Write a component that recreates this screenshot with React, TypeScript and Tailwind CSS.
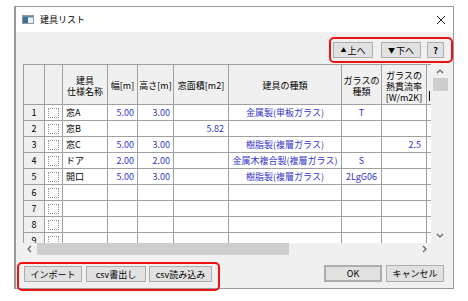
import type { ReactNode } from 'react';

type Row = {
    no: number;
    name?: string;
    w?: string;
    h?: string;
    area?: string;
    kind?: string;
    glass?: string;
    u?: string;
};

const rows: Row[] = [
    { no: 1, name: '窓A', w: '5.00', h: '3.00', kind: '金属製(単板ガラス)', glass: 'T' },
    { no: 2, name: '窓B', area: '5.82' },
    { no: 3, name: '窓C', w: '5.00', h: '3.00', kind: '樹脂製(複層ガラス)', u: '2.5' },
    { no: 4, name: 'ドア', w: '2.00', h: '2.00', kind: '金属木複合製(複層ガラス)', glass: 'S' },
    { no: 5, name: '開口', w: '5.00', h: '3.00', kind: '樹脂製(複層ガラス)', glass: '2LgG06' },
    { no: 6 },
    { no: 7 },
    { no: 8 },
    { no: 9 },
];

function Chevron({ dir }: { dir: 'up' | 'down' | 'left' | 'right' }) {
    const pts = {
        up: '1,5 4,2 7,5',
        down: '1,2 4,5 7,2',
        left: '5,1 2,4 5,7',
        right: '2,1 5,4 2,7',
    }[dir];
    return (
        <svg width="8" height="8" viewBox="0 0 8 8">
            <polyline points={pts} fill="none" stroke="#606060" strokeWidth="1.2" />
        </svg>
    );
}

function Btn({ children, className }: { children: ReactNode; className: string }) {
    return (
        <div
            className={`flex items-center justify-center bg-[#e1e1e1] border border-[#adadad] text-[9px] leading-none text-black ${className}`}
        >
            {children}
        </div>
    );
}

function Head({ w, children, className = '' }: { w: string; children?: ReactNode; className?: string }) {
    return (
        <div
            className={`${w} h-full shrink-0 border-r border-[#a0a0a0] bg-[#f0f0f0] flex flex-col items-center justify-center text-center text-[9px] leading-[11px] pt-[2px] ${className}`}
        >
            {children}
        </div>
    );
}

function Cell({ w, children, className = '' }: { w: string; children?: ReactNode; className?: string }) {
    return (
        <div
            className={`${w} h-full shrink-0 border-r border-[#a0a0a0] flex items-center text-[9px] leading-none whitespace-nowrap overflow-hidden ${className}`}
        >
            {children}
        </div>
    );
}

export default function App() {
    return (
        <div className="relative w-[468px] h-[301px] bg-white font-['Noto_Sans_CJK_JP','Noto_Sans',sans-serif] text-black overflow-hidden">
            <div className="ml-[14px] mt-[6px] w-[440px] h-[283px] border border-l-2 border-[#9a9a9a] flex flex-col">
                {/* title bar */}
                <div className="h-[25px] shrink-0 bg-white flex items-center pl-[6px] pr-[7px]">
                    <svg width="12" height="9" viewBox="0 0 12 9">
                        <rect x="0.5" y="0.5" width="11" height="8" fill="#e8eef2" stroke="#8a9aa6" />
                        <rect x="1" y="1" width="5" height="7" fill="#3f6f8c" />
                        <rect x="1" y="1" width="10" height="1.5" fill="#5d8aa6" />
                    </svg>
                    <span className="ml-[6px] text-[9px] leading-none">建具リスト</span>
                    <svg className="ml-auto" width="10" height="10" viewBox="0 0 10 10">
                        <path d="M1 1 L9 9 M9 1 L1 9" stroke="#222" strokeWidth="1" />
                    </svg>
                </div>

                <div className="flex-1 bg-[#f0f0f0] flex flex-col">
                    {/* toolbar */}
                    <div className="h-[32px] shrink-0 flex justify-end items-start pt-[10px] pr-[9px]">
                        <Btn className="w-[40px] h-[16px]">
                            <span className="text-[6px] mr-[1px]">▲</span>上へ
                        </Btn>
                        <Btn className="w-[40px] h-[16px] ml-[8px]">
                            <span className="text-[7px] mr-[1px]">▼</span>下へ
                        </Btn>
                        <Btn className="w-[17px] h-[16px] ml-[6px] font-bold text-[8px]">?</Btn>
                    </div>

                    {/* grid */}
                    <div className="ml-[7px] h-[191px] shrink-0 flex">
                        <div className="w-[408px] flex flex-col">
                            <div className="h-[179px] overflow-hidden border-l border-t border-[#a0a0a0] bg-white">
                                <div className="h-[40px] flex border-b border-[#a0a0a0]">
                                    <Head w="w-[21px]" className="bg-[#e9e9e9]" />
                                    <Head w="w-[18px]" />
                                    <Head w="w-[45px]">
                                        <span>建具</span>
                                        <span>仕様名称</span>
                                    </Head>
                                    <Head w="w-[30px]">幅[m]</Head>
                                    <Head w="w-[36px]">高さ[m]</Head>
                                    <Head w="w-[55px]">窓面積[m2]</Head>
                                    <Head w="w-[113px]">建具の種類</Head>
                                    <Head w="w-[40px]">
                                        <span>ガラスの</span>
                                        <span>種類</span>
                                    </Head>
                                    <Head w="w-[45px]" className="pt-[3px] leading-[10px]">
                                        <span>ガラスの</span>
                                        <span>熱貫流率</span>
                                        <span>[W/m2K]</span>
                                    </Head>
                                    <div className="w-[4px] h-full bg-[#f0f0f0] flex items-end pb-[3px] pl-[2px]">
                                        <div className="w-px h-[10px] bg-black" />
                                    </div>
                                </div>
                                {rows.map((r) => (
                                    <div key={r.no} className="h-[16px] flex border-b border-[#a0a0a0]">
                                        <Cell w="w-[21px]" className="bg-[#f0f0f0] justify-center">
                                            {r.no}
                                        </Cell>
                                        <Cell w="w-[18px]" className="justify-center">
                                            <div className="w-[11px] h-[10px] border border-dotted border-[#8c8c8c]" />
                                        </Cell>
                                        <Cell w="w-[45px]" className="pl-[3px]">
                                            {r.name}
                                        </Cell>
                                        <Cell w="w-[30px]" className="justify-end pr-[3px] text-[#3434c8]">
                                            {r.w}
                                        </Cell>
                                        <Cell w="w-[36px]" className="justify-end pr-[3px] text-[#3434c8]">
                                            {r.h}
                                        </Cell>
                                        <Cell w="w-[55px]" className="justify-end pr-[4px] text-[#3434c8]">
                                            {r.area}
                                        </Cell>
                                        <Cell w="w-[113px]" className="justify-center text-[#3434c8]">
                                            {r.kind}
                                        </Cell>
                                        <Cell w="w-[40px]" className="justify-center text-[#3434c8]">
                                            {r.glass}
                                        </Cell>
                                        <Cell w="w-[45px]" className="justify-end pr-[5px] text-[#3434c8]">
                                            {r.u}
                                        </Cell>
                                        <div className="w-[4px]" />
                                    </div>
                                ))}
                            </div>
                            {/* horizontal scrollbar */}
                            <div className="h-[12px] flex bg-[#f0f0f0]">
                                <div className="w-[14px] flex items-center justify-center">
                                    <Chevron dir="left" />
                                </div>
                                <div className="w-[252px] bg-[#cdcdcd]" />
                                <div className="flex-1" />
                                <div className="w-[13px] flex items-center justify-center">
                                    <Chevron dir="right" />
                                </div>
                            </div>
                        </div>
                        {/* vertical scrollbar */}
                        <div className="w-[22px] flex flex-col bg-[#f0f0f0]">
                            <div className="w-[18px] h-[179px] flex flex-col items-center">
                                <div className="h-[14px] flex items-center justify-center pt-[2px]">
                                    <Chevron dir="up" />
                                </div>
                                <div className="w-[15px] h-[13px] bg-[#cdcdcd]" />
                                <div className="flex-1" />
                                <div className="h-[14px] flex items-center justify-center">
                                    <Chevron dir="down" />
                                </div>
                            </div>
                        </div>
                    </div>

                    {/* bottom buttons */}
                    <div className="flex-1 flex items-start pt-[11px] pl-[8px] pr-[9px]">
                        <Btn className="w-[58px] h-[16px] text-[8px]">インポート</Btn>
                        <Btn className="w-[60px] h-[16px] ml-[4px]">csv書出し</Btn>
                        <Btn className="w-[63px] h-[16px] ml-[3px]">csv読み込み</Btn>
                        <Btn className="w-[58px] h-[17px] ml-auto -mt-px border-2 border-[#0078d7]">OK</Btn>
                        <Btn className="w-[58px] h-[17px] ml-[4px] -mt-px text-[8px]">キャンセル</Btn>
                    </div>
                </div>
            </div>

            {/* annotation boxes */}
            <div className="absolute left-[329px] top-[37px] w-[124px] h-[26px] border-2 border-[#ee1111] rounded-[5px]" />
            <div className="absolute left-[17px] top-[262px] w-[203px] h-[29px] border-2 border-[#ee1111] rounded-[5px]" />
        </div>
    );
}
